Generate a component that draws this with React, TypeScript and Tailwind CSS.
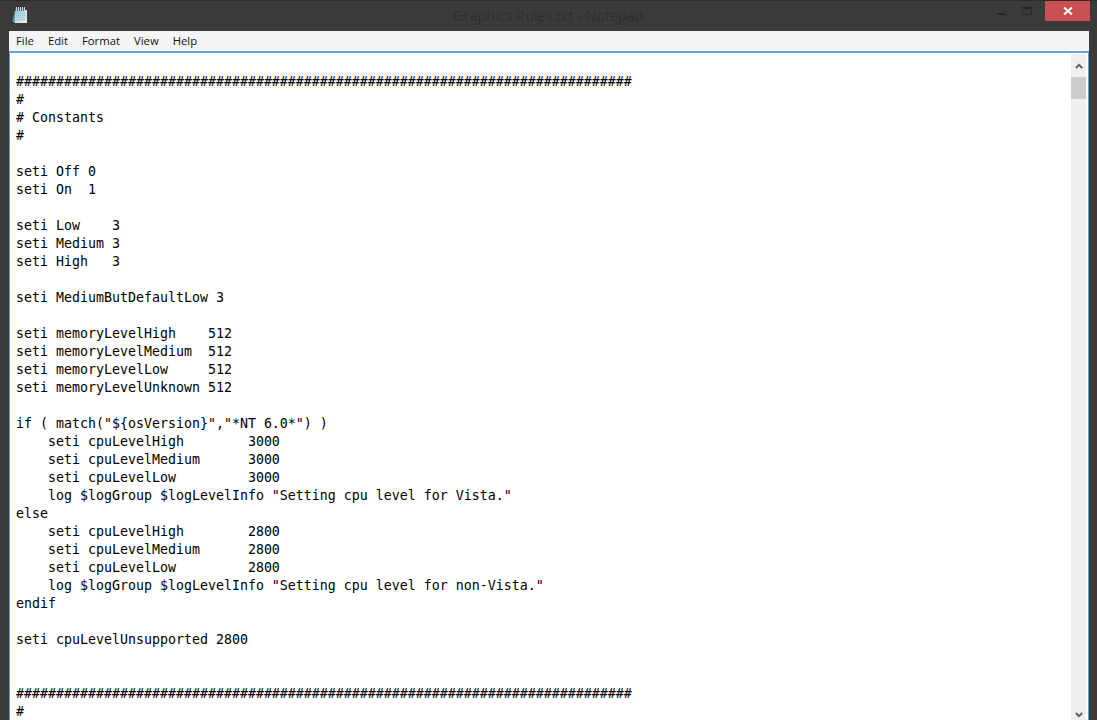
const HASHES = "#".repeat(77);

const LINES = [
	"",
	HASHES,
	"#",
	"# Constants",
	"#",
	"",
	"seti Off 0",
	"seti On  1",
	"",
	"seti Low    3",
	"seti Medium 3",
	"seti High   3",
	"",
	"seti MediumButDefaultLow 3",
	"",
	"seti memoryLevelHigh    512",
	"seti memoryLevelMedium  512",
	"seti memoryLevelLow     512",
	"seti memoryLevelUnknown 512",
	"",
	'if ( match("${osVersion}","*NT 6.0*") )',
	"    seti cpuLevelHigh        3000",
	"    seti cpuLevelMedium      3000",
	"    seti cpuLevelLow         3000",
	'    log $logGroup $logLevelInfo "Setting cpu level for Vista."',
	"else",
	"    seti cpuLevelHigh        2800",
	"    seti cpuLevelMedium      2800",
	"    seti cpuLevelLow         2800",
	'    log $logGroup $logLevelInfo "Setting cpu level for non-Vista."',
	"endif",
	"",
	"seti cpuLevelUnsupported 2800",
	"",
	"",
	HASHES,
	"#",
];

const NotepadIcon = () => (
	<svg width="16" height="17" viewBox="0 0 16 17" className="shrink-0">
		<defs>
			<linearGradient id="page" x1="0" y1="0" x2="1" y2="1">
				<stop offset="0" stopColor="#8ec6da" />
				<stop offset="1" stopColor="#dceff5" />
			</linearGradient>
		</defs>
		<path d="M3 3 0.500 14.500 3 16z" fill="#5d9fb8" />
		<path d="M3 3h12v13H3z" fill="#ece8d8" />
		<path d="M3 3h11v12H3z" fill="url(#page)" />
		<path d="M4 6.500h9M4 8.500h9M4 10.500h9M4 12.500h9" stroke="#a3cbd9" strokeWidth="1" />
		<path d="M4.500 0v3.500M6.500 0v3.500M8.500 0v3.500M10.500 0v3.500M12.500 0v3.500" stroke="#d8d8d8" strokeWidth="1" />
		<path d="M3.500 1v3M5.500 1v3M7.500 1v3M9.500 1v3M11.500 1v3" stroke="#4d5a60" strokeWidth="1" />
	</svg>
);

const TitleBar = () => (
	<header className="relative h-[31px] shrink-0 flex items-start border-t border-[#2c2c2c]">
		<div className="pl-[12px] pt-[6px]">
			<NotepadIcon />
		</div>
		<div className="flex-1 text-center text-[14.3px] leading-[30px] text-[#2e2e2e] pl-[81px] font-['Open_Sans',sans-serif]">
			Graphics Rules.txt - Notepad
		</div>
		<div className="flex items-start pr-[7px]">
			<div className="w-[26px] h-[20px] flex justify-center pt-[12px]">
				<div className="w-[8px] h-[2px] bg-[#262626]" />
			</div>
			<div className="w-[26px] h-[20px] flex justify-center pt-[6px] mr-[5px]">
				<div className="w-[10px] h-[8px] border border-t-2 border-[#262626]" />
			</div>
			<div className="w-[45px] h-[20px] bg-[#c75050] flex items-center justify-center">
				<svg width="10" height="8" viewBox="0 0 10 8">
					<path d="M1 0.500 9 7.500M9 0.500 1 7.500" stroke="#ffffff" strokeWidth="2" />
				</svg>
			</div>
		</div>
	</header>
);

const MenuBar = () => (
	<nav className="h-[20px] shrink-0 bg-[#f4f5f7] flex items-center gap-[14px] pl-[7px] text-[11.3px] text-[#111111] font-['Open_Sans',sans-serif]">
		<span>File</span>
		<span>Edit</span>
		<span>Format</span>
		<span>View</span>
		<span>Help</span>
	</nav>
);

const ScrollBar = () => (
	<div className="w-[15px] shrink-0 bg-[#efefef] flex flex-col items-center mt-[1px] mr-[2px]">
		<div className="h-[23px] shrink-0 flex items-center justify-center">
			<svg width="8" height="6" viewBox="0 0 8 6">
				<path d="M0.800 5 4 1.800 7.200 5" fill="none" stroke="#606060" strokeWidth="2" />
			</svg>
		</div>
		<div className="w-full h-[22px] shrink-0 bg-[#cdcdcd]" />
		<div className="flex-1" />
		<div className="h-[14px] shrink-0 flex items-start justify-center pt-[6px]">
			<svg width="8" height="6" viewBox="0 0 8 6">
				<path d="M0.800 1 4 4.200 7.200 1" fill="none" stroke="#606060" strokeWidth="2" />
			</svg>
		</div>
	</div>
);

export default function App() {
	return (
		<div className="w-[1097px] h-[720px] overflow-hidden bg-[#3a3a3a] flex flex-col">
			<TitleBar />
			<div className="flex-1 min-h-0 flex flex-col ml-[9px] mr-[8px]">
				<MenuBar />
				<div className="flex-1 min-h-0 flex bg-white border-l border-r border-t-2 border-x-[#5a9bd8] border-t-[#6aa3d8]">
					<pre className="flex-1 min-w-0 overflow-hidden pl-[6px] pt-[2px] text-[13.29px] leading-[18px] text-black font-['DejaVu_Sans_Mono',monospace]">
						{LINES.map((line, i) => (
							<div key={i} className="h-[18px]">{line}</div>
						))}
					</pre>
					<ScrollBar />
				</div>
			</div>
		</div>
	);
}
